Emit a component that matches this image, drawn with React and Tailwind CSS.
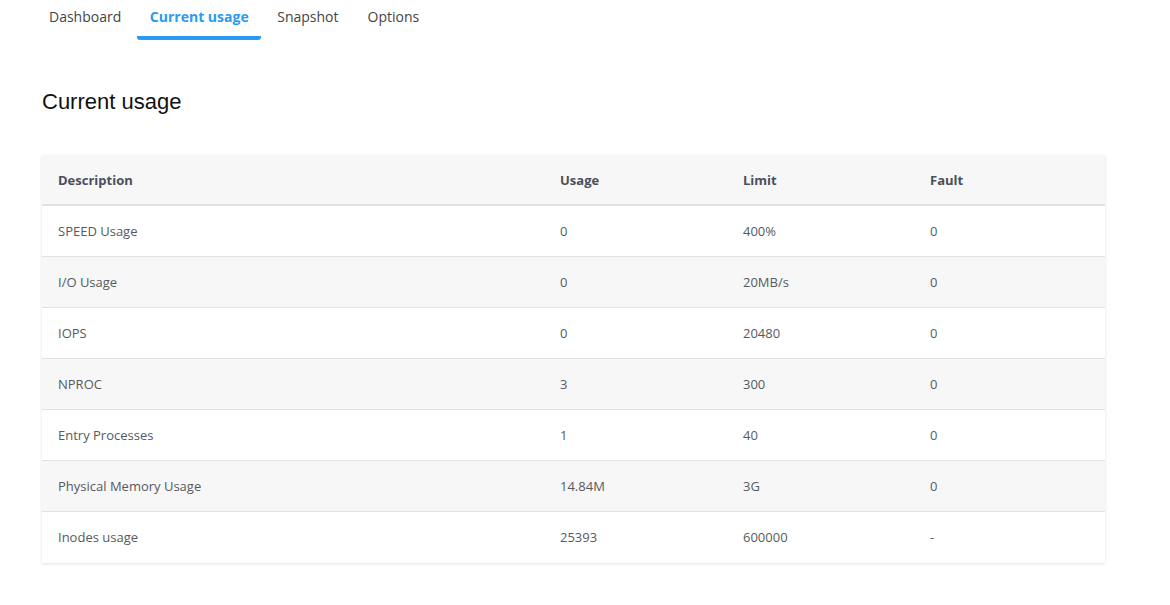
import React from 'react';

const tabs = ['Dashboard', 'Current usage', 'Snapshot', 'Options'];

const rows = [
  { name: 'SPEED Usage', usage: '0', limit: '400%', fault: '0' },
  { name: 'I/O Usage', usage: '0', limit: '20MB/s', fault: '0' },
  { name: 'IOPS', usage: '0', limit: '20480', fault: '0' },
  { name: 'NPROC', usage: '3', limit: '300', fault: '0' },
  { name: 'Entry Processes', usage: '1', limit: '40', fault: '0' },
  { name: 'Physical Memory Usage', usage: '14.84M', limit: '3G', fault: '0' },
  { name: 'Inodes usage', usage: '25393', limit: '600000', fault: '-' },
];

const App = () => {
  return (
    <div className="min-h-screen w-full bg-white font-['Open_Sans',sans-serif]">
      {/* Tabs */}
      <div className="flex gap-[3px] pl-[36px]">
        {tabs.map((tab) => {
          const active = tab === 'Current usage';
          return (
            <div
              key={tab}
              className={`h-[40px] pt-[6px] text-[14px] rounded-b-[3px] ${
                active
                  ? 'w-[124px] text-center whitespace-nowrap font-bold text-[#2b9af3] border-b-4 border-[#2b9af3]'
                  : 'px-[13px] text-[#444]'
              }`}
            >
              {tab}
            </div>
          );
        })}
      </div>

      {/* Heading */}
      <h1 className="pl-[42px] mt-[48px] text-[22px] leading-[28px] text-[#111] font-['Liberation_Sans',Arial,sans-serif]">
        Current usage
      </h1>

      {/* Table */}
      <div className="ml-[42px] mt-[39px] w-[1063px] bg-white shadow-[0_1px_3px_rgba(0,0,0,0.12)]">
        <div className="grid grid-cols-[518px_183px_187px_1fr] h-[51px] pt-[2px] items-center bg-[#f7f7f7] border-b-2 border-[#e2e2e2] text-[13px] font-bold text-[#4a4f5a]">
          <div className="pl-[16px]">Description</div>
          <div>Usage</div>
          <div>Limit</div>
          <div>Fault</div>
        </div>
        {rows.map((r, i) => (
          <div
            key={r.name}
            className={`grid grid-cols-[518px_183px_187px_1fr] h-[51px] pt-[2px] items-center text-[13px] text-[#555a62] border-b ${
              i % 2 === 1 ? 'bg-[#f7f7f7]' : 'bg-white'
            } ${i < rows.length - 1 ? 'border-[#e2e2e2]' : 'border-transparent'}`}
          >
            <div className="pl-[16px]">{r.name}</div>
            <div>{r.usage}</div>
            <div>{r.limit}</div>
            <div>{r.fault}</div>
          </div>
        ))}
      </div>
    </div>
  );
};

export default App;
